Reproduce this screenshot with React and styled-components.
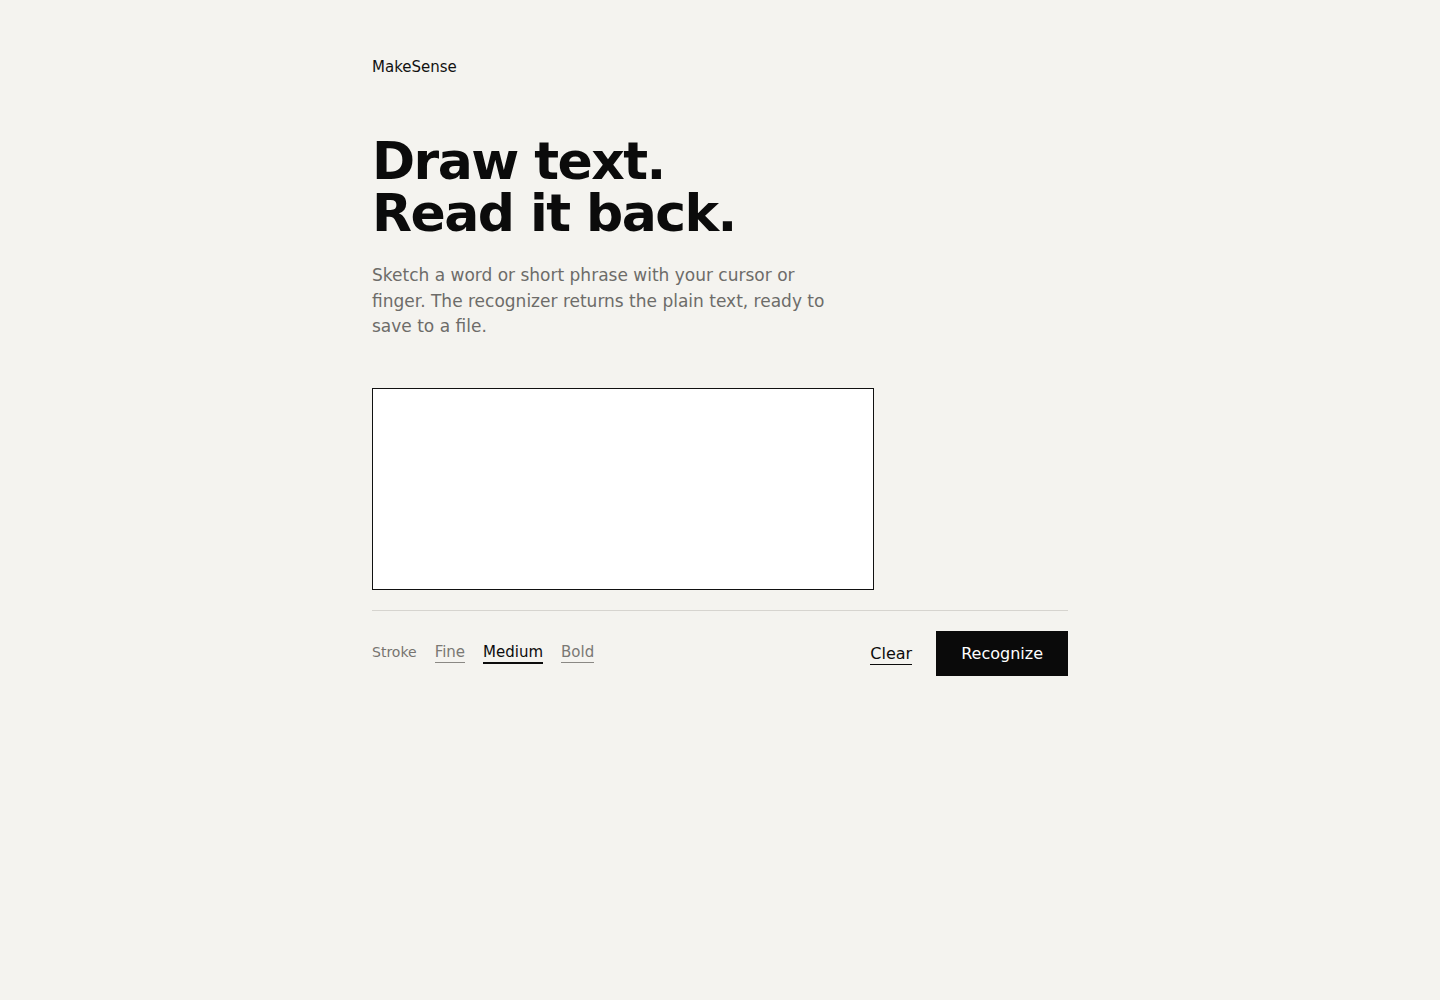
import React, { useState } from "react";
import styled, { createGlobalStyle } from "styled-components";

const GlobalStyle = createGlobalStyle`
  html, body {
    margin: 0;
    padding: 0;
    background: #f4f3ef;
  }
  body {
    font-family: "DejaVu Sans", "Liberation Sans", sans-serif;
    color: #0c0c0c;
  }
`;

const Page = styled.main`
  max-width: 696px;
  margin: 0 auto;
  padding: 57px 0 80px;
`;

const Brand = styled.div`
  font-size: 15px;
  line-height: 20px;
  color: #111;
`;

const Title = styled.h1`
  margin: 58px 0 0;
  font-size: 52px;
  line-height: 52px;
  font-weight: bold;
  letter-spacing: -0.03em;
  color: #0b0b0b;
`;

const Lede = styled.p`
  margin: 24px 0 0;
  max-width: 480px;
  font-size: 17px;
  line-height: 25.5px;
  color: #6d6c69;
`;

const Canvas = styled.canvas`
  display: block;
  margin-top: 48px;
  width: 500px;
  height: 200px;
  background: #fff;
  border: 1px solid #111;
`;

const Toolbar = styled.div`
  margin-top: 20px;
  padding-top: 20px;
  border-top: 1px solid #d6d4cf;
  display: flex;
  align-items: center;
  justify-content: space-between;
`;

const Group = styled.div`
  display: flex;
  align-items: center;
  gap: 18px;
`;

const Label = styled.span`
  font-size: 14px;
  margin-bottom: 2px;
  color: #777470;
`;

const Option = styled.button`
  background: none;
  border: none;
  padding: 0 0 1px;
  font-family: inherit;
  font-size: 15px;
  cursor: pointer;
  color: ${(p) => (p.$active ? "#0c0c0c" : "#7a7874")};
  border-bottom: ${(p) => (p.$active ? "2px solid #0c0c0c" : "1px solid #8a8884")};
`;

const Actions = styled.div`
  display: flex;
  align-items: center;
  gap: 24px;
`;

const TextButton = styled.button`
  background: none;
  border: none;
  border-bottom: 1px solid #0c0c0c;
  padding: 2px 0 1px;
  font-family: inherit;
  font-size: 16px;
  color: #0c0c0c;
  cursor: pointer;
`;

const PrimaryButton = styled.button`
  height: 45px;
  padding: 0 25px;
  background: #0a0a0a;
  color: #fff;
  border: none;
  font-family: inherit;
  font-size: 16px;
  cursor: pointer;
`;

const strokes = ["Fine", "Medium", "Bold"];

export default function App() {
  const [stroke, setStroke] = useState("Medium");
  return (
    <>
      <GlobalStyle />
      <Page>
        <Brand>MakeSense</Brand>
        <Title>
          Draw text.
          <br />
          Read it back.
        </Title>
        <Lede>
          Sketch a word or short phrase with your cursor or finger. The
          recognizer returns the plain text, ready to save to a file.
        </Lede>
        <Canvas width={500} height={200} />
        <Toolbar>
          <Group>
            <Label>Stroke</Label>
            {strokes.map((s) => (
              <Option key={s} $active={s === stroke} onClick={() => setStroke(s)}>
                {s}
              </Option>
            ))}
          </Group>
          <Actions>
            <TextButton>Clear</TextButton>
            <PrimaryButton>Recognize</PrimaryButton>
          </Actions>
        </Toolbar>
      </Page>
    </>
  );
}
